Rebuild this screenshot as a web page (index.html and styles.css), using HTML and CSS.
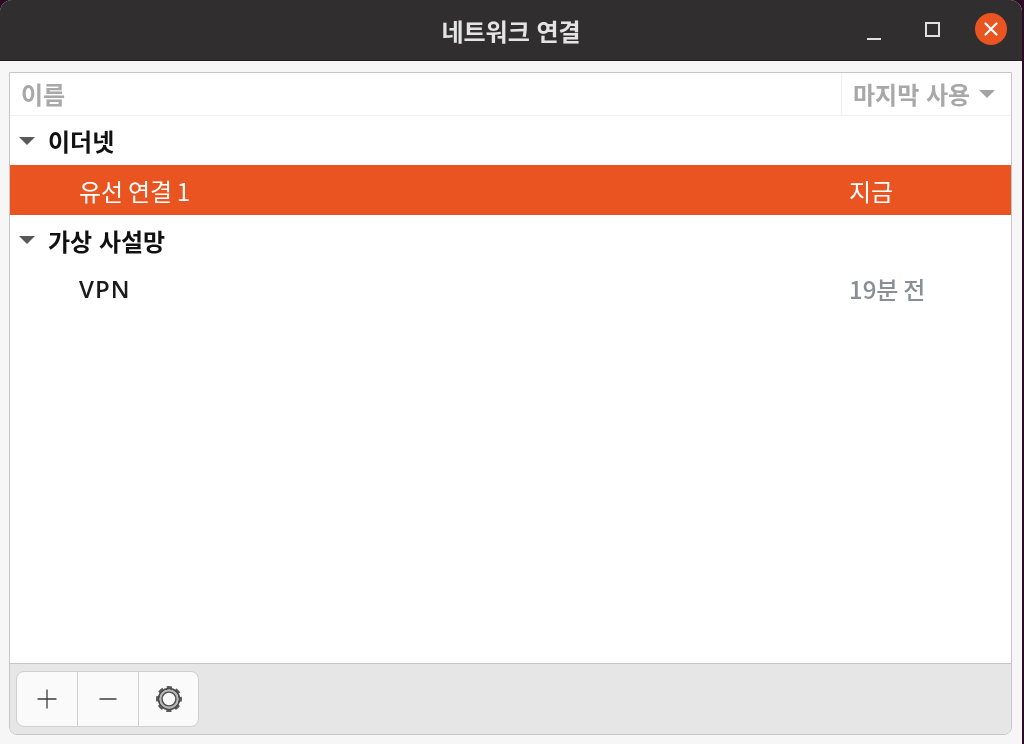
FILE: index.html
```html
<!DOCTYPE html>
<html lang="ko">
<head>
  <meta charset="UTF-8">
  <title>네트워크 연결</title>
  <link rel="stylesheet" href="styles.css">
</head>
<body>
  <div class="window">
    <header class="titlebar">
      <h1 class="title">네트워크 연결</h1>
      <div class="controls">
        <span class="min-icon"></span>
        <span class="max-icon"></span>
        <span class="close-btn">
          <svg width="16" height="16" viewBox="0 0 16 16"><path d="M2.500 2.500l11 11M13.500 2.500l-11 11" stroke="#fff" stroke-width="2.200" stroke-linecap="round" fill="none"/></svg>
        </span>
      </div>
    </header>
    <div class="content">
      <div class="frame">
        <div class="list-head">
          <div class="col-name">이름</div>
          <div class="col-used">마지막 사용<span class="arrow arrow-light"></span></div>
        </div>
        <div class="list">
          <div class="group"><span class="arrow"></span>이더넷</div>
          <div class="row selected"><span class="row-name">유선 연결 1</span><span class="row-used">지금</span></div>
          <div class="group"><span class="arrow"></span>가상 사설망</div>
          <div class="row row-vpn"><span class="row-name latin">VPN</span><span class="row-used dim">19분 전</span></div>
        </div>
        <div class="toolbar">
          <div class="btn-group">
            <button class="tool-btn">
              <svg width="20" height="20" viewBox="0 0 20 20"><path d="M10 0.500v19M0.500 10h19" stroke="#3d3d3d" stroke-width="1.300" fill="none"/></svg>
            </button>
            <button class="tool-btn">
              <svg width="20" height="20" viewBox="0 0 20 20"><path d="M1.500 10h17" stroke="#3d3d3d" stroke-width="1.300" fill="none"/></svg>
            </button>
            <button class="tool-btn">
              <svg width="28" height="28" viewBox="0 0 28 28">
                <circle cx="14" cy="14" r="12" fill="none" stroke="#5a5a5a" stroke-width="2" stroke-dasharray="5.400 4.025" stroke-dashoffset="2.700"/>
                <circle cx="14" cy="14" r="10.400" fill="none" stroke="#4a4a4a" stroke-width="1.800"/>
                <circle cx="14" cy="14" r="8.700" fill="none" stroke="#b5b5b5" stroke-width="1.600"/>
                <circle cx="14" cy="14" r="7" fill="none" stroke="#4f4f4f" stroke-width="1.600"/>
              </svg>
            </button>
          </div>
        </div>
      </div>
    </div>
  </div>
</body>
</html>
```

FILE: styles.css
```css
html, body {
  margin: 0;
  height: 100%;
  background: #2c0a24;
  overflow: hidden;
}
body {
  font-family: "Noto Sans CJK KR", "Noto Sans", sans-serif;
  color: #111;
}
.window {
  width: 1022px;
  height: 744px;
  display: flex;
  flex-direction: column;
  background: #f6f6f6;
  border-radius: 12px 12px 0 0;
  overflow: hidden;
  filter: blur(0.4px);
}
.titlebar {
  height: 60px;
  flex: none;
  display: flex;
  align-items: center;
  justify-content: center;
  position: relative;
  background: #302e2e;
  border-bottom: 1px solid #1f1e1e;
}
.title {
  margin: 0;
  font-size: 24px;
  font-weight: 700;
  color: #e4e4e4;
}
.controls {
  position: absolute;
  top: 13px;
  right: 15px;
  display: flex;
  align-items: center;
}
.min-icon {
  width: 14px;
  height: 2px;
  margin: 19px 44px 0 0;
  background: #e0e0e0;
}
.max-icon {
  width: 11px;
  height: 11px;
  margin-right: 35px;
  border: 2px solid #e0e0e0;
}
.close-btn {
  width: 32px;
  height: 32px;
  display: flex;
  align-items: center;
  justify-content: center;
  border-radius: 50%;
  background: #e95420;
}
.content {
  flex: 1;
  padding: 11px 10px 9px 9px;
  display: flex;
}
.frame {
  flex: 1;
  display: flex;
  flex-direction: column;
  background: #fff;
  border: 1px solid #c6c6c6;
  border-radius: 0 0 8px 8px;
  overflow: hidden;
}
.list-head {
  height: 42px;
  flex: none;
  display: flex;
  justify-content: space-between;
  border-bottom: 1px solid #f1f1f1;
  font-size: 24px;
  font-weight: 700;
  color: #a8a8a8;
}
.col-name {
  padding-left: 11px;
  line-height: 42px;
}
.col-used {
  width: 170px;
  padding-left: 11px;
  line-height: 42px;
  border-left: 1px solid #f1f1f1;
  display: flex;
  align-items: center;
  gap: 9px;
  box-sizing: border-box;
}
.list {
  flex: 1;
}
.arrow {
  width: 0;
  height: 0;
  flex: none;
  border-left: 8px solid transparent;
  border-right: 8px solid transparent;
  border-top: 8px solid #595959;
}
.arrow-light {
  border-top-color: #a3a3a3;
}
.group {
  height: 50px;
  display: flex;
  align-items: center;
  gap: 13px;
  padding-left: 9px;
  font-size: 24px;
  font-weight: 700;
  color: #111;
}
.group:first-child {
  height: 49px;
}
.row {
  height: 50px;
  display: flex;
  align-items: center;
  font-size: 24px;
  font-weight: 500;
  word-spacing: -2px;
  color: #1a1a1a;
}
.row-vpn {
  padding-bottom: 3px;
  box-sizing: border-box;
}
.row-name {
  width: 770px;
  padding-left: 69px;
}
.latin {
  font-family: "Open Sans", sans-serif;
  font-weight: 600;
  letter-spacing: 1px;
}
.row-used {
  flex: 1;
}
.dim {
  color: #8a8f96;
}
.selected {
  background: #e95420;
  color: #fff;
  font-weight: 400;
}
.toolbar {
  height: 70px;
  flex: none;
  display: flex;
  align-items: center;
  padding-left: 6px;
  background: #e6e6e6;
  border-top: 1px solid #c6c6c6;
}
.btn-group {
  display: flex;
  background: #fafafa;
  border: 1px solid #cfcfcf;
  border-radius: 8px;
  overflow: hidden;
}
.tool-btn {
  width: 61px;
  height: 54px;
  padding: 0;
  display: flex;
  align-items: center;
  justify-content: center;
  background: none;
  border: 0;
  border-left: 1px solid #cfcfcf;
}
.tool-btn:first-child {
  border-left: 0;
  width: 60px;
}
.tool-btn:last-child {
  width: 60px;
}
```
